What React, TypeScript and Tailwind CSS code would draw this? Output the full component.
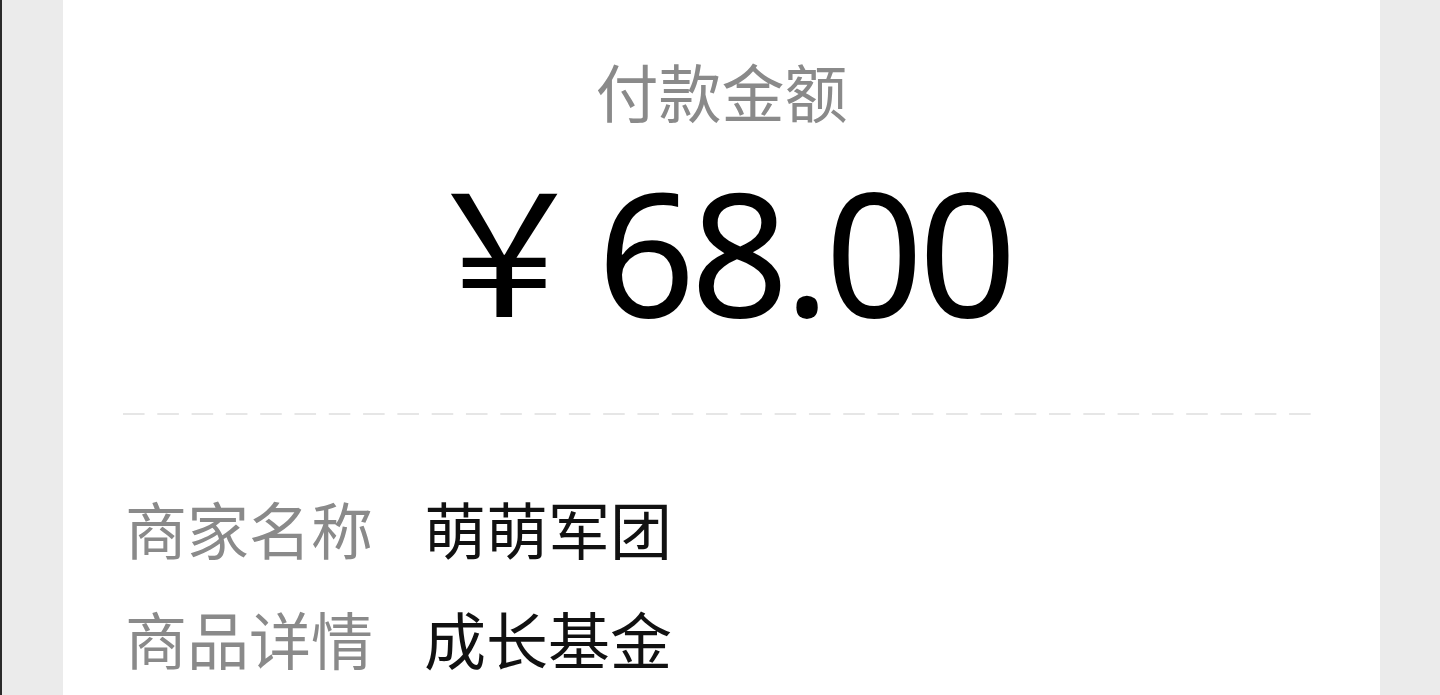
export default function App() {
  const rows = [
    { label: "商家名称", value: "萌萌军团" },
    { label: "商品详情", value: "成长基金" },
  ];

  return (
    <div className="h-[695px] w-[1440px] overflow-hidden bg-[#ebebeb] border-l-2 border-[#2a2a2a] flex">
      <div className="ml-[61px] w-[1317px] h-full bg-white flex flex-col items-center font-['Noto_Sans_CJK_SC',sans-serif]">
        {/* title */}
        <div className="mt-[58px] text-[63px] leading-none text-[#8a8a8a]">付款金额</div>

        {/* amount */}
        <div className="mt-[37px] ml-[-12px] flex items-baseline text-black">
          <span className="text-[170px] leading-none mr-[8px] font-['Noto_Sans_CJK_SC',sans-serif]">￥</span>
          <span className="text-[172px] leading-none tracking-[-5px] font-['Noto_Sans',sans-serif]">68.00</span>
        </div>

        {/* dashed divider */}
        <div className="mt-[77px] self-stretch ml-[60px] mr-[69px] h-[2px] bg-[linear-gradient(to_right,#e6e6e6_22px,transparent_22px)] bg-[length:34.3px_2px] bg-repeat-x" />

        {/* details */}
        <div className="self-stretch pl-[62px] mt-[82px] flex flex-col gap-[48px]">
          {rows.map((r) => (
            <div key={r.label} className="flex text-[62px] leading-none">
              <span className="text-[#8a8a8a] w-[299px]">{r.label}</span>
              <span className="text-[#111]">{r.value}</span>
            </div>
          ))}
        </div>
      </div>
    </div>
  );
}
